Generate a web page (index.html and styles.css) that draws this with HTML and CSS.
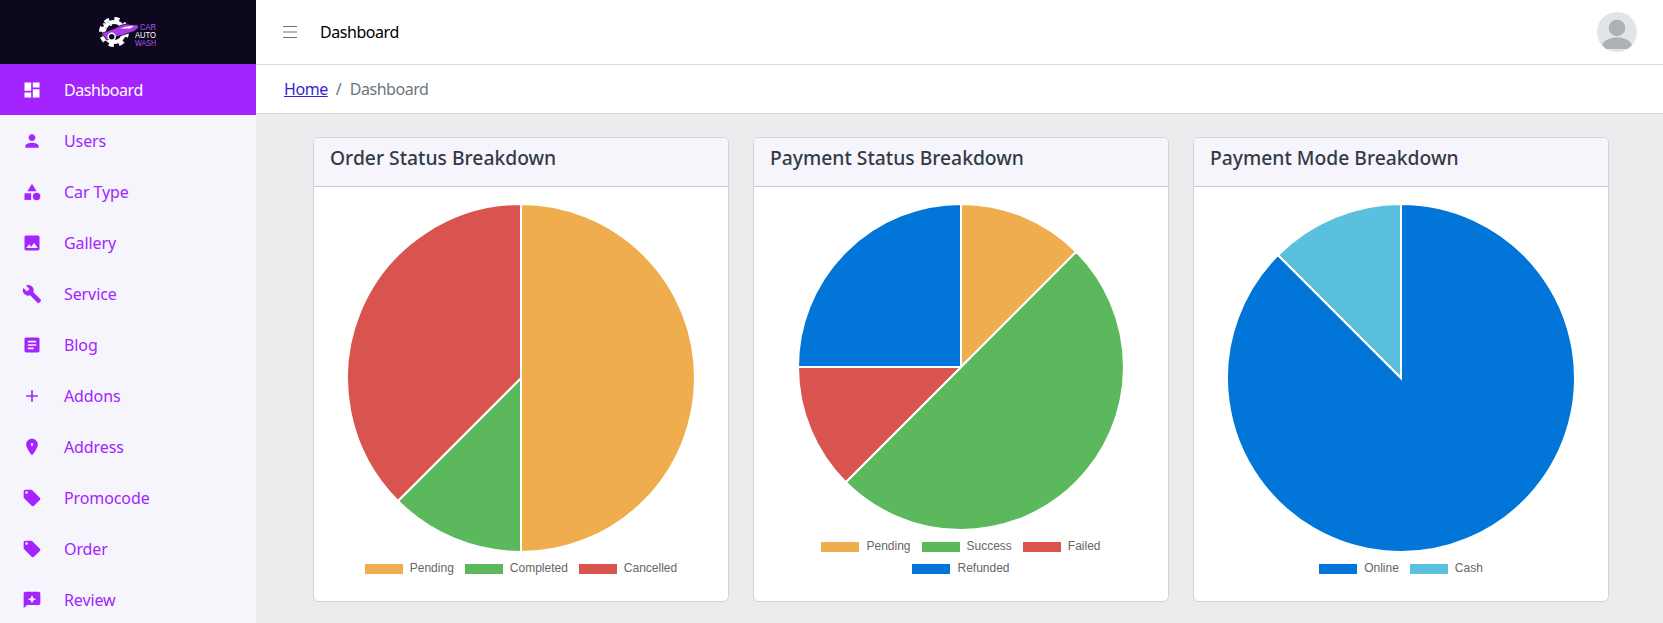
FILE: index.html
```html
<!DOCTYPE html>
<html>
<head>
    <meta content="text/html; charset=utf-8" http-equiv="Content-Type">
    <meta content="width=device-width, initial-scale=1" name="viewport">
    <link rel="stylesheet" href="styles.css">
    <title>Dashboard</title>
</head>
<body>
    <div class="app">
        <aside class="sidebar">
            <div class="brand">
                <svg class="brand-logo" viewBox="0 0 66 36">
                    <circle class="gear-teeth" cx="16" cy="18" r="13"/>
                    <circle class="gear-ring" cx="16" cy="18" r="10"/>
                    <path class="car-body" d="M3.7 19.3L17 14.3Q23 10.5 28.7 10L40.3 11V14.3L35.3 17.7L8.7 26Z"/>
                    <path class="car-glass" d="M22 14.5Q28 11.5 36 12L32 14.5Z"/>
                    <circle class="car-wheel" cx="13.7" cy="22.7" r="3.5"/>
                    <path class="car-spark" d="M5 9h2v2H5zM9 7h2v2H9zM12 10h2v2h-2zM7 13h2v2H7zM14 6h1.500v1.500H14z"/>
                    <text class="logo-word logo-car" x="42" y="16" textLength="16" lengthAdjust="spacingAndGlyphs">CAR</text>
                    <text class="logo-word logo-auto" x="37" y="24" textLength="21" lengthAdjust="spacingAndGlyphs">AUTO</text>
                    <text class="logo-word logo-car" x="37" y="32" textLength="21" lengthAdjust="spacingAndGlyphs">WASH</text>
                </svg>
            </div>
            <nav class="menu">
                <a class="menu-item active narrow"><svg class="menu-icon" viewBox="0 0 24 24"><path d="M3 13h8V3H3v10zm0 8h8v-6H3v6zm10 0h8V11h-8v10zm0-18v6h8V3h-8z"/></svg>Dashboard</a>
                <a class="menu-item"><svg class="menu-icon" viewBox="0 0 24 24"><path d="M12 12c2.21 0 4-1.79 4-4s-1.79-4-4-4-4 1.79-4 4 1.79 4 4 4zm0 2c-2.67 0-8 1.34-8 4v2h16v-2c0-2.66-5.33-4-8-4z"/></svg>Users</a>
                <a class="menu-item"><svg class="menu-icon" viewBox="0 0 24 24"><path d="M12 2l-5.500 9h11z"/><circle cx="17.500" cy="17.500" r="4.500"/><path d="M3 13.500h8v8H3z"/></svg>Car Type</a>
                <a class="menu-item"><svg class="menu-icon" viewBox="0 0 24 24"><path d="M21 19V5c0-1.100-.9-2-2-2H5c-1.100 0-2 .9-2 2v14c0 1.100.9 2 2 2h14c1.100 0 2-.9 2-2zM8.500 13.500l2.500 3.010L14.500 12l4.500 6H5l3.500-4.500z"/></svg>Gallery</a>
                <a class="menu-item"><svg class="menu-icon" viewBox="0 0 24 24"><path d="M22.700 19l-9.100-9.100c.9-2.300.4-5-1.500-6.900-2-2-5-2.400-7.400-1.300L9 6 6 9 1.600 4.700C.4 7.100.9 10.100 2.900 12.100c1.900 1.900 4.600 2.400 6.900 1.500l9.100 9.100c.4.4 1 .4 1.400 0l2.300-2.300c.5-.4.5-1.100.1-1.400z"/></svg>Service</a>
                <a class="menu-item"><svg class="menu-icon" viewBox="0 0 24 24"><path d="M19 3H5c-1.100 0-2 .9-2 2v14c0 1.100.9 2 2 2h14c1.100 0 2-.9 2-2V5c0-1.100-.9-2-2-2zm-5 14H7v-2h7v2zm3-4H7v-2h10v2zm0-4H7V7h10v2z"/></svg>Blog</a>
                <a class="menu-item"><svg class="menu-icon" viewBox="0 0 24 24"><path d="M19 13h-6v6h-2v-6H5v-2h6V5h2v6h6v2z"/></svg>Addons</a>
                <a class="menu-item"><svg class="menu-icon" viewBox="0 0 24 24"><path fill-rule="evenodd" d="M12 2C8.130 2 5 5.130 5 9c0 5.250 7 13 7 13s7-7.750 7-13c0-3.870-3.130-7-7-7zm0 5.500a1.500 1.500 0 1 1 0 3 1.500 1.500 0 0 1 0-3z"/></svg>Address</a>
                <a class="menu-item"><svg class="menu-icon" viewBox="0 0 24 24"><path d="M21.410 11.580l-9-9C12.050 2.220 11.550 2 11 2H4c-1.100 0-2 .9-2 2v7c0 .55.22 1.050.59 1.420l9 9c.36.36.86.58 1.410.58.55 0 1.050-.22 1.410-.59l7-7c.37-.36.59-.86.59-1.410 0-.55-.23-1.060-.59-1.420zM5.500 7C4.670 7 4 6.330 4 5.500S4.670 4 5.500 4 7 4.670 7 5.500 6.330 7 5.500 7z"/></svg>Promocode</a>
                <a class="menu-item"><svg class="menu-icon" viewBox="0 0 24 24"><path d="M21.410 11.580l-9-9C12.050 2.220 11.550 2 11 2H4c-1.100 0-2 .9-2 2v7c0 .55.22 1.050.59 1.420l9 9c.36.36.86.58 1.410.58.55 0 1.050-.22 1.410-.59l7-7c.37-.36.59-.86.59-1.410 0-.55-.23-1.060-.59-1.420zM5.500 7C4.670 7 4 6.330 4 5.500S4.670 4 5.500 4 7 4.670 7 5.500 6.330 7 5.500 7z"/></svg>Order</a>
                <a class="menu-item"><svg class="menu-icon" viewBox="0 0 24 24"><path fill-rule="evenodd" d="M20 2H4c-1.100 0-2 .9-2 2v18l4-4h14c1.100 0 2-.9 2-2V4c0-1.100-.9-2-2-2zM12 6l1.500 3.500L17 11l-3.500 1.500L12 16l-1.500-3.500L7 11l3.500-1.500z"/></svg>Review</a>
            </nav>
        </aside>
        <div class="content">
            <header class="topbar">
                <svg class="burger" viewBox="0 0 14 12"><path d="M0 .5h14M0 6h14M0 11.500h14"/></svg>
                <div class="topbar-title narrow">Dashboard</div>
                <svg class="avatar" viewBox="0 0 40 40">
                    <circle class="avatar-bg" cx="20" cy="20" r="20"/>
                    <circle class="avatar-fg" cx="20" cy="16" r="8.300"/>
                    <path class="avatar-fg" d="M5 33c2-5 8-7.500 15-7.500s13 2.500 15 7.500c-2 1-3 4-5 4H10c-2 0-3-3-5-4z"/>
                </svg>
            </header>
            <div class="crumbs">
                <a class="crumb-link narrow" href="#">Home</a>
                <span class="crumb-sep">/</span>
                <span class="crumb-now narrow">Dashboard</span>
            </div>
            <main class="cards">
                <section class="card">
                    <h3 class="card-head">Order Status Breakdown</h3>
                    <div class="card-body">
                        <svg class="pie pie-large" viewBox="-175 -175 350 350">
                            <path class="c-orange" d="M0 0V-174A174 174 0 0 1 0 174Z"/>
                            <path class="c-green" d="M0 0V174A174 174 0 0 1 -123.040 123.040Z"/>
                            <path class="c-red" d="M0 0L-123.040 123.040A174 174 0 0 1 0 -174Z"/>
                        </svg>
                        <div class="legend">
                            <span class="legend-item"><i class="swatch bg-orange"></i>Pending</span>
                            <span class="legend-item"><i class="swatch bg-green"></i>Completed</span>
                            <span class="legend-item"><i class="swatch bg-red"></i>Cancelled</span>
                        </div>
                    </div>
                </section>
                <section class="card">
                    <h3 class="card-head">Payment Status Breakdown</h3>
                    <div class="card-body">
                        <svg class="pie pie-small" viewBox="-164 -164 328 328">
                            <path class="c-orange" d="M0 0V-163A163 163 0 0 1 115.260 -115.260Z"/>
                            <path class="c-green" d="M0 0L115.260 -115.260A163 163 0 0 1 -115.260 115.260Z"/>
                            <path class="c-red" d="M0 0L-115.260 115.260A163 163 0 0 1 -163 0Z"/>
                            <path class="c-blue" d="M0 0H-163A163 163 0 0 1 0 -163Z"/>
                        </svg>
                        <div class="legend legend-wrap">
                            <span class="legend-item"><i class="swatch bg-orange"></i>Pending</span>
                            <span class="legend-item"><i class="swatch bg-green"></i>Success</span>
                            <span class="legend-item"><i class="swatch bg-red"></i>Failed</span>
                            <span class="legend-item"><i class="swatch bg-blue"></i>Refunded</span>
                        </div>
                    </div>
                </section>
                <section class="card">
                    <h3 class="card-head">Payment Mode Breakdown</h3>
                    <div class="card-body">
                        <svg class="pie pie-large" viewBox="-175 -175 350 350">
                            <path class="c-blue" d="M0 0V-174A174 174 0 1 1 -123.040 -123.040Z"/>
                            <path class="c-cyan" d="M0 0L-123.040 -123.040A174 174 0 0 1 0 -174Z"/>
                        </svg>
                        <div class="legend">
                            <span class="legend-item"><i class="swatch bg-blue"></i>Online</span>
                            <span class="legend-item"><i class="swatch bg-cyan"></i>Cash</span>
                        </div>
                    </div>
                </section>
            </main>
        </div>
    </div>
</body>
</html>
```

FILE: styles.css
```css
* {
    box-sizing: border-box;
}

html, body {
    margin: 0;
    height: 100%;
    overflow: hidden;
}

body {
    font-family: "Noto Sans", sans-serif;
    font-size: 16px;
    color: #000;
    background: #ebecee;
}

.app {
    display: flex;
    height: 100vh;
}

.narrow {
    letter-spacing: -0.45px;
}

/* sidebar */
.sidebar {
    width: 256px;
    flex-shrink: 0;
    background: #f6f5fc;
}

.brand {
    height: 64px;
    background: #0e081f;
    display: flex;
    justify-content: center;
    align-items: center;
}

.brand-logo {
    width: 66px;
    height: 36px;
    margin-left: 6px;
}

.gear-teeth {
    fill: none;
    stroke: #fff;
    stroke-width: 4;
    stroke-dasharray: 5.100 5.100;
}

.gear-ring {
    fill: none;
    stroke: #fff;
    stroke-width: 4;
}

.car-body {
    fill: #a83ce6;
    stroke: #0e081f;
    stroke-width: 0.8;
}

.car-glass {
    fill: #fff;
}

.car-wheel {
    fill: #0e081f;
    stroke: #fff;
    stroke-width: 1.500;
}

.car-spark {
    fill: #d8d8d8;
}

.logo-word {
    font-family: "Liberation Sans", sans-serif;
    font-size: 8.500px;
}

.logo-car {
    fill: #b257e6;
}

.logo-auto {
    fill: #fff;
}

.menu-item {
    height: 51px;
    display: flex;
    align-items: center;
    gap: 22px;
    padding-left: 22px;
    color: #a324ff;
    letter-spacing: -0.1px;
    text-decoration: none;
}

.menu-item.narrow {
    letter-spacing: -0.45px;
}

.menu-item.active {
    background: #a324ff;
    color: #fff;
}

.menu-icon {
    width: 20px;
    height: 20px;
    flex-shrink: 0;
    fill: currentColor;
}

/* top */
.content {
    flex: 1;
    min-width: 0;
}

.topbar {
    height: 65px;
    background: #fff;
    border-bottom: 1px solid #d8dbe0;
    display: flex;
    align-items: center;
    padding: 0 26px 1px 27px;
}

.burger {
    width: 14px;
    height: 12px;
    margin-right: 23px;
    fill: none;
    stroke: #6f7377;
    stroke-width: 1;
}

.topbar-title {
    flex: 1;
}

.avatar {
    width: 40px;
    height: 40px;
}

.avatar-bg {
    fill: #e3e4e6;
}

.avatar-fg {
    fill: #adb1b5;
}

.crumbs {
    height: 49px;
    background: #fff;
    border-bottom: 1px solid #d8dbe0;
    display: flex;
    align-items: center;
    padding-left: 28px;
    gap: 8px;
}

.crumb-link {
    color: #321fdb;
}

.crumb-sep, .crumb-now {
    color: #6c757d;
}

/* cards */
.cards {
    display: grid;
    grid-template-columns: repeat(3, 416px);
    gap: 24px;
    padding: 23px 0 0 57px;
}

.card {
    height: 465px;
    background: #fff;
    border: 1px solid #d0d2d6;
    border-radius: 6px;
    overflow: hidden;
}

.card-head {
    margin: 0;
    height: 49px;
    padding: 0 16px 9px;
    display: flex;
    align-items: center;
    font-size: 19.300px;
    font-weight: 500;
    color: #333a47;
    background: #f5f5fb;
    border-bottom: 1px solid #cfccd9;
}

.card-body {
    padding-top: 16px;
}

.pie {
    display: block;
    margin: 0 auto;
}

.pie path {
    stroke: #fff;
    stroke-width: 2;
}

.pie-large {
    width: 350px;
    height: 350px;
}

.pie-small {
    width: 328px;
    height: 328px;
}

.c-orange { fill: #f0ad4e; }
.c-green { fill: #5cb85c; }
.c-red { fill: #d9534f; }
.c-blue { fill: #0275d8; }
.c-cyan { fill: #5bc0de; }

.bg-orange { background: #f0ad4e; }
.bg-green { background: #5cb85c; }
.bg-red { background: #d9534f; }
.bg-blue { background: #0275d8; }
.bg-cyan { background: #5bc0de; }

.legend {
    margin: 4px 18px 0;
    display: flex;
    flex-wrap: wrap;
    justify-content: center;
    column-gap: 11px;
    font-family: "Liberation Sans", sans-serif;
    font-size: 12px;
    color: #666;
}

.legend-wrap {
    margin: 4px 60px 0;
}

.legend-item {
    height: 22px;
    display: flex;
    align-items: center;
    gap: 7px;
}

.swatch {
    width: 38px;
    height: 10px;
    margin-top: 2px;
}
```
